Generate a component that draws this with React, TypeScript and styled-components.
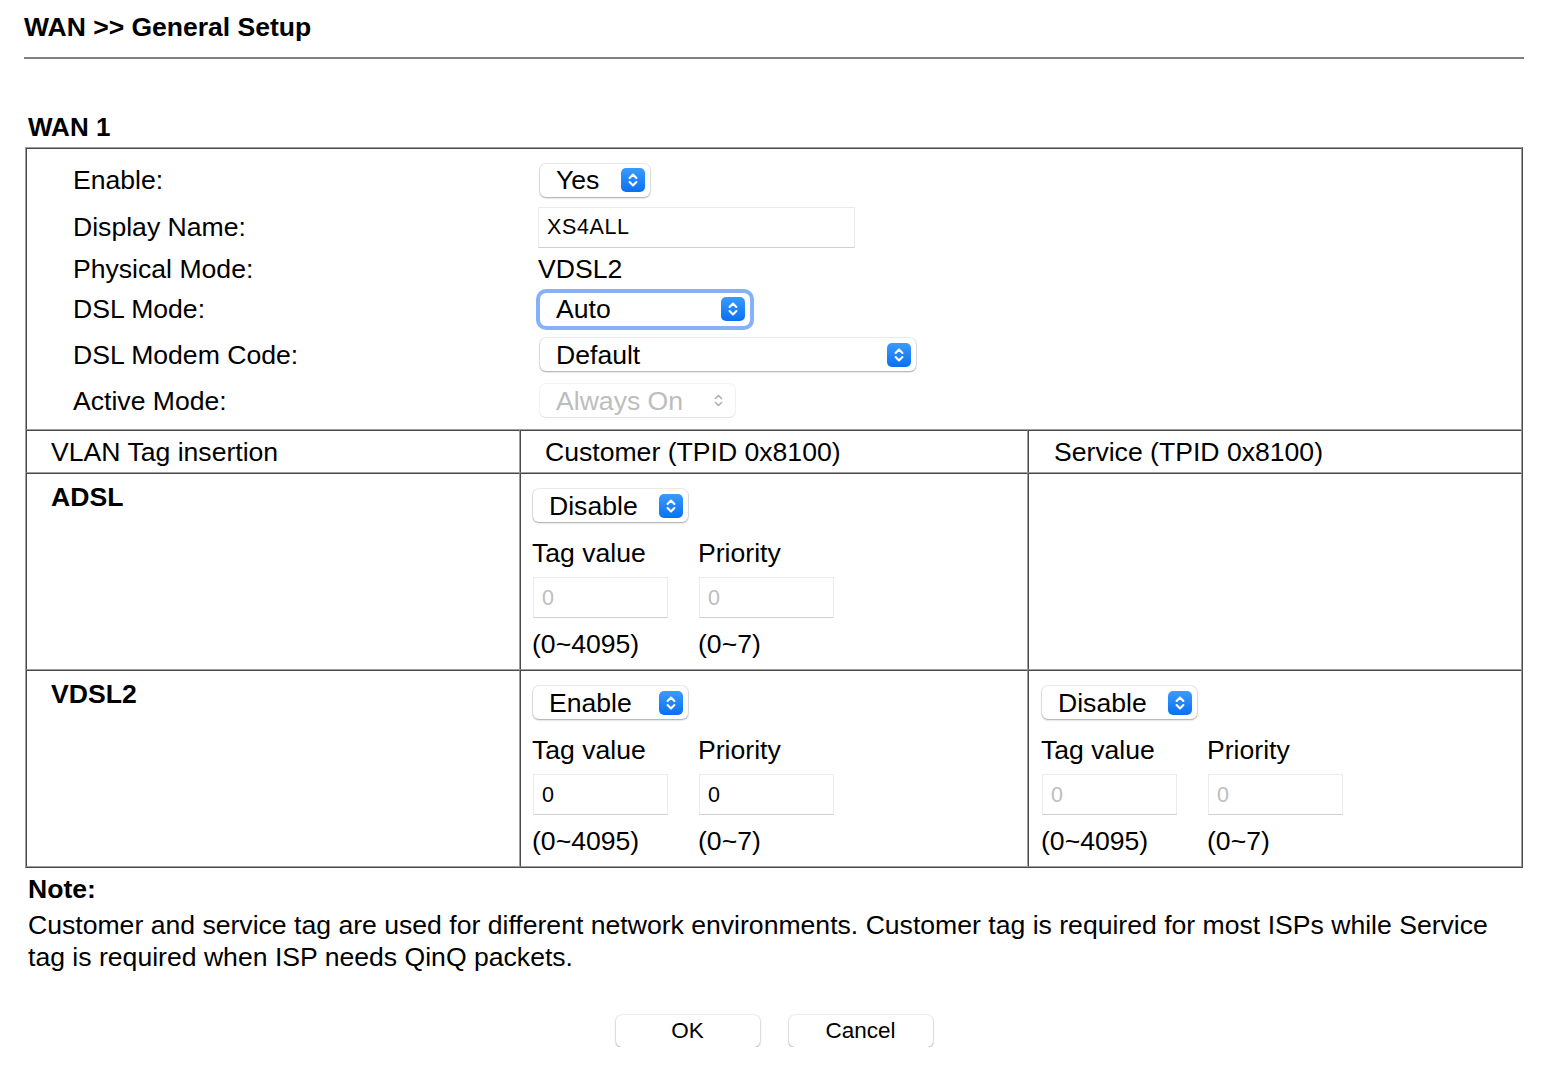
import styled, { createGlobalStyle } from 'styled-components';

const GlobalStyle = createGlobalStyle`
  html, body {
    margin: 0;
    padding: 0;
    background: #fff;
  }
  body {
    font-family: "Liberation Sans", Arial, Helvetica, sans-serif;
    color: #000;
  }
`;

const Page = styled.div`
  width: 1500px;
  padding: 12px 0 0 24px;
  font-size: 26.6px;
`;

const Title = styled.h1`
  margin: 0;
  font-size: 26.5px;
  line-height: 30px;
  font-weight: 700;
`;

const Rule = styled.div`
  margin-top: 15px;
  height: 2px;
  background: #808080;
`;

const SectionTitle = styled.h2`
  margin: 53px 0 5px 4px;
  font-size: 26px;
  line-height: 30px;
  font-weight: 700;
`;

const Table = styled.table`
  width: 1498px;
  margin-left: 1px;
  table-layout: fixed;
  border-collapse: separate;
  border-spacing: 0;
  border-style: solid;
  border-width: 1px;
  border-color: #9f9f9f #4a4a4a #4a4a4a #9f9f9f;
`;

const Cell = styled.td<{ $pad?: string; $h?: number }>`
  padding: ${(p) => p.$pad ?? '0'};
  height: ${(p) => (p.$h ? `${p.$h}px` : 'auto')};
  box-sizing: border-box;
  vertical-align: top;
  border-style: solid;
  border-width: 1px;
  border-color: #4a4a4a #9f9f9f #9f9f9f #4a4a4a;
  font-size: 26.6px;
  line-height: 30px;
`;

const HeadCell = styled(Cell)`
  vertical-align: middle;
`;

const BandLabel = styled.div`
  font-weight: 700;
`;

const Form = styled.div`
  display: grid;
  grid-template-columns: 465px 1fr;
`;

const Label = styled.div<{ $h: number }>`
  height: ${(p) => p.$h}px;
  display: flex;
  align-items: center;
`;

const Value = styled(Label)``;

const SelectBox = styled.div<{ $w: number; $focus?: boolean; $disabled?: boolean; $ml?: number }>`
  width: ${(p) => p.$w}px;
  height: 33px;
  margin-left: ${(p) => p.$ml ?? 2}px;
  box-sizing: border-box;
  display: flex;
  align-items: center;
  justify-content: space-between;
  padding: 0 5px 0 16px;
  background: #fff;
  border-radius: 6px;
  color: ${(p) => (p.$disabled ? '#bdbdbd' : '#000')};
  font-size: 26.6px;
  box-shadow: ${(p) =>
    p.$focus
      ? '0 0 0 4px rgba(122,170,246,0.92)'
      : p.$disabled
      ? '0 0 0 1px rgba(0,0,0,0.05), 0 1px 1px rgba(0,0,0,0.07)'
      : '0 0 0 1px rgba(0,0,0,0.07), 0 1px 2px rgba(0,0,0,0.3)'};

  & > svg {
    flex-shrink: 0;
  }
`;

const TextInput = styled.div<{ $w: number; $disabled?: boolean }>`
  width: ${(p) => p.$w}px;
  height: 41px;
  box-sizing: border-box;
  display: flex;
  align-items: center;
  padding-left: 8px;
  border: 1px solid #ebebeb;
  border-bottom-color: #d0d0d0;
  background: #fff;
  font-size: 21.5px;
  letter-spacing: 0.6px;
  color: ${(p) => (p.$disabled ? '#bdbdbd' : '#000')};
`;

const VlanBox = styled.div`
  display: flex;
  flex-direction: column;
  padding-top: 15px;
`;

const Pair = styled.div`
  display: flex;
  margin-top: 16px;
`;

const Field = styled.div`
  width: 166px;
  display: flex;
  flex-direction: column;
`;

const Caption = styled.div`
  line-height: 30px;
`;

const FieldInput = styled(TextInput)`
  margin: 9px 0 11px 1px;
`;

const Note = styled.div`
  margin: 5px 0 0 4px;
  font-weight: 700;
  line-height: 32px;
`;

const NoteText = styled.p`
  margin: 4px 0 0 4px;
  line-height: 32px;
`;

const Actions = styled.div`
  display: flex;
  justify-content: center;
  gap: 29px;
  margin-top: 42px;
`;

const Button = styled.button`
  width: 144px;
  height: 32px;
  border: none;
  border-radius: 6px;
  background: #fff;
  font-family: "Liberation Sans", Arial, sans-serif;
  font-size: 22.5px;
  color: #000;
  box-shadow: 0 0 0 1px rgba(0,0,0,0.06), 0 1px 2px rgba(0,0,0,0.3);
`;

function Chevrons({ disabled }: { disabled?: boolean }) {
  if (disabled) {
    return (
      <svg width="23" height="23" viewBox="0 0 23 23">
        <path d="M8.5 9.5 L11.5 6.5 L14.5 9.5 M8.5 13.5 L11.5 16.5 L14.5 13.5" fill="none" stroke="#b0b0b0" strokeWidth="1.6" strokeLinecap="round" strokeLinejoin="round" />
      </svg>
    );
  }
  return (
    <svg width="24" height="24" viewBox="0 0 24 24">
      <defs>
        <linearGradient id="selg" x1="0" y1="0" x2="0" y2="1">
          <stop offset="0" stopColor="#3a9bfd" />
          <stop offset="1" stopColor="#0a70f2" />
        </linearGradient>
      </defs>
      <rect x="0" y="0" width="24" height="24" rx="5" fill="url(#selg)" />
      <path d="M8.6 10 L12 6.6 L15.4 10 M8.6 14 L12 17.4 L15.4 14" fill="none" stroke="#fff" strokeWidth="2.1" strokeLinecap="round" strokeLinejoin="round" />
    </svg>
  );
}

interface SelectProps {
  value: string;
  width: number;
  focus?: boolean;
  disabled?: boolean;
  ml?: number;
}

function Select({ value, width, focus, disabled, ml }: SelectProps) {
  return (
    <SelectBox $w={width} $focus={focus} $disabled={disabled} $ml={ml}>
      <span>{value}</span>
      <Chevrons disabled={disabled} />
    </SelectBox>
  );
}

interface VlanProps {
  mode: string;
  disabled?: boolean;
}

function VlanSettings({ mode, disabled }: VlanProps) {
  return (
    <VlanBox>
      <Select value={mode} width={155} ml={1} />
      <Pair>
        <Field>
          <Caption>Tag value</Caption>
          <FieldInput $w={135} $disabled={disabled}>0</FieldInput>
          <Caption>(0~4095)</Caption>
        </Field>
        <Field>
          <Caption>Priority</Caption>
          <FieldInput $w={135} $disabled={disabled}>0</FieldInput>
          <Caption>(0~7)</Caption>
        </Field>
      </Pair>
    </VlanBox>
  );
}

export default function App() {
  return (
    <Page>
      <GlobalStyle />
      <Title>WAN &gt;&gt; General Setup</Title>
      <Rule />
      <SectionTitle>WAN 1</SectionTitle>
      <Table>
        <colgroup>
          <col style={{ width: 494 }} />
          <col style={{ width: 508 }} />
          <col style={{ width: 494 }} />
        </colgroup>
        <tbody>
          <tr>
            <Cell colSpan={3} $pad="8px 0 6px 46px">
              <Form>
                <Label $h={46}>Enable:</Label>
                <Value $h={46}><Select value="Yes" width={110} /></Value>
                <Label $h={48}>Display Name:</Label>
                <Value $h={48}><TextInput $w={317}>XS4ALL</TextInput></Value>
                <Label $h={36}>Physical Mode:</Label>
                <Value $h={36}>VDSL2</Value>
                <Label $h={44}>DSL Mode:</Label>
                <Value $h={44}><Select value="Auto" width={210} focus /></Value>
                <Label $h={47}>DSL Modem Code:</Label>
                <Value $h={47}><Select value="Default" width={376} /></Value>
                <Label $h={45}>Active Mode:</Label>
                <Value $h={45}><Select value="Always On" width={195} disabled /></Value>
              </Form>
            </Cell>
          </tr>
          <tr>
            <HeadCell $h={43} $pad="0 0 0 24px">VLAN Tag insertion</HeadCell>
            <HeadCell $h={43} $pad="0 0 0 24px">Customer (TPID 0x8100)</HeadCell>
            <HeadCell $h={43} $pad="0 0 0 25px">Service (TPID 0x8100)</HeadCell>
          </tr>
          <tr>
            <Cell $h={197} $pad="8px 0 0 24px"><BandLabel>ADSL</BandLabel></Cell>
            <Cell $h={197} $pad="0 0 0 11px"><VlanSettings mode="Disable" disabled /></Cell>
            <Cell $h={197} />
          </tr>
          <tr>
            <Cell $h={197} $pad="8px 0 0 24px"><BandLabel>VDSL2</BandLabel></Cell>
            <Cell $h={197} $pad="0 0 0 11px"><VlanSettings mode="Enable" /></Cell>
            <Cell $h={197} $pad="0 0 0 12px"><VlanSettings mode="Disable" disabled /></Cell>
          </tr>
        </tbody>
      </Table>
      <Note>Note:</Note>
      <NoteText>
        Customer and service tag are used for different network environments. Customer tag is required for most ISPs while Service
        <br />
        tag is required when ISP needs QinQ packets.
      </NoteText>
      <Actions>
        <Button type="button">OK</Button>
        <Button type="button">Cancel</Button>
      </Actions>
    </Page>
  );
}
